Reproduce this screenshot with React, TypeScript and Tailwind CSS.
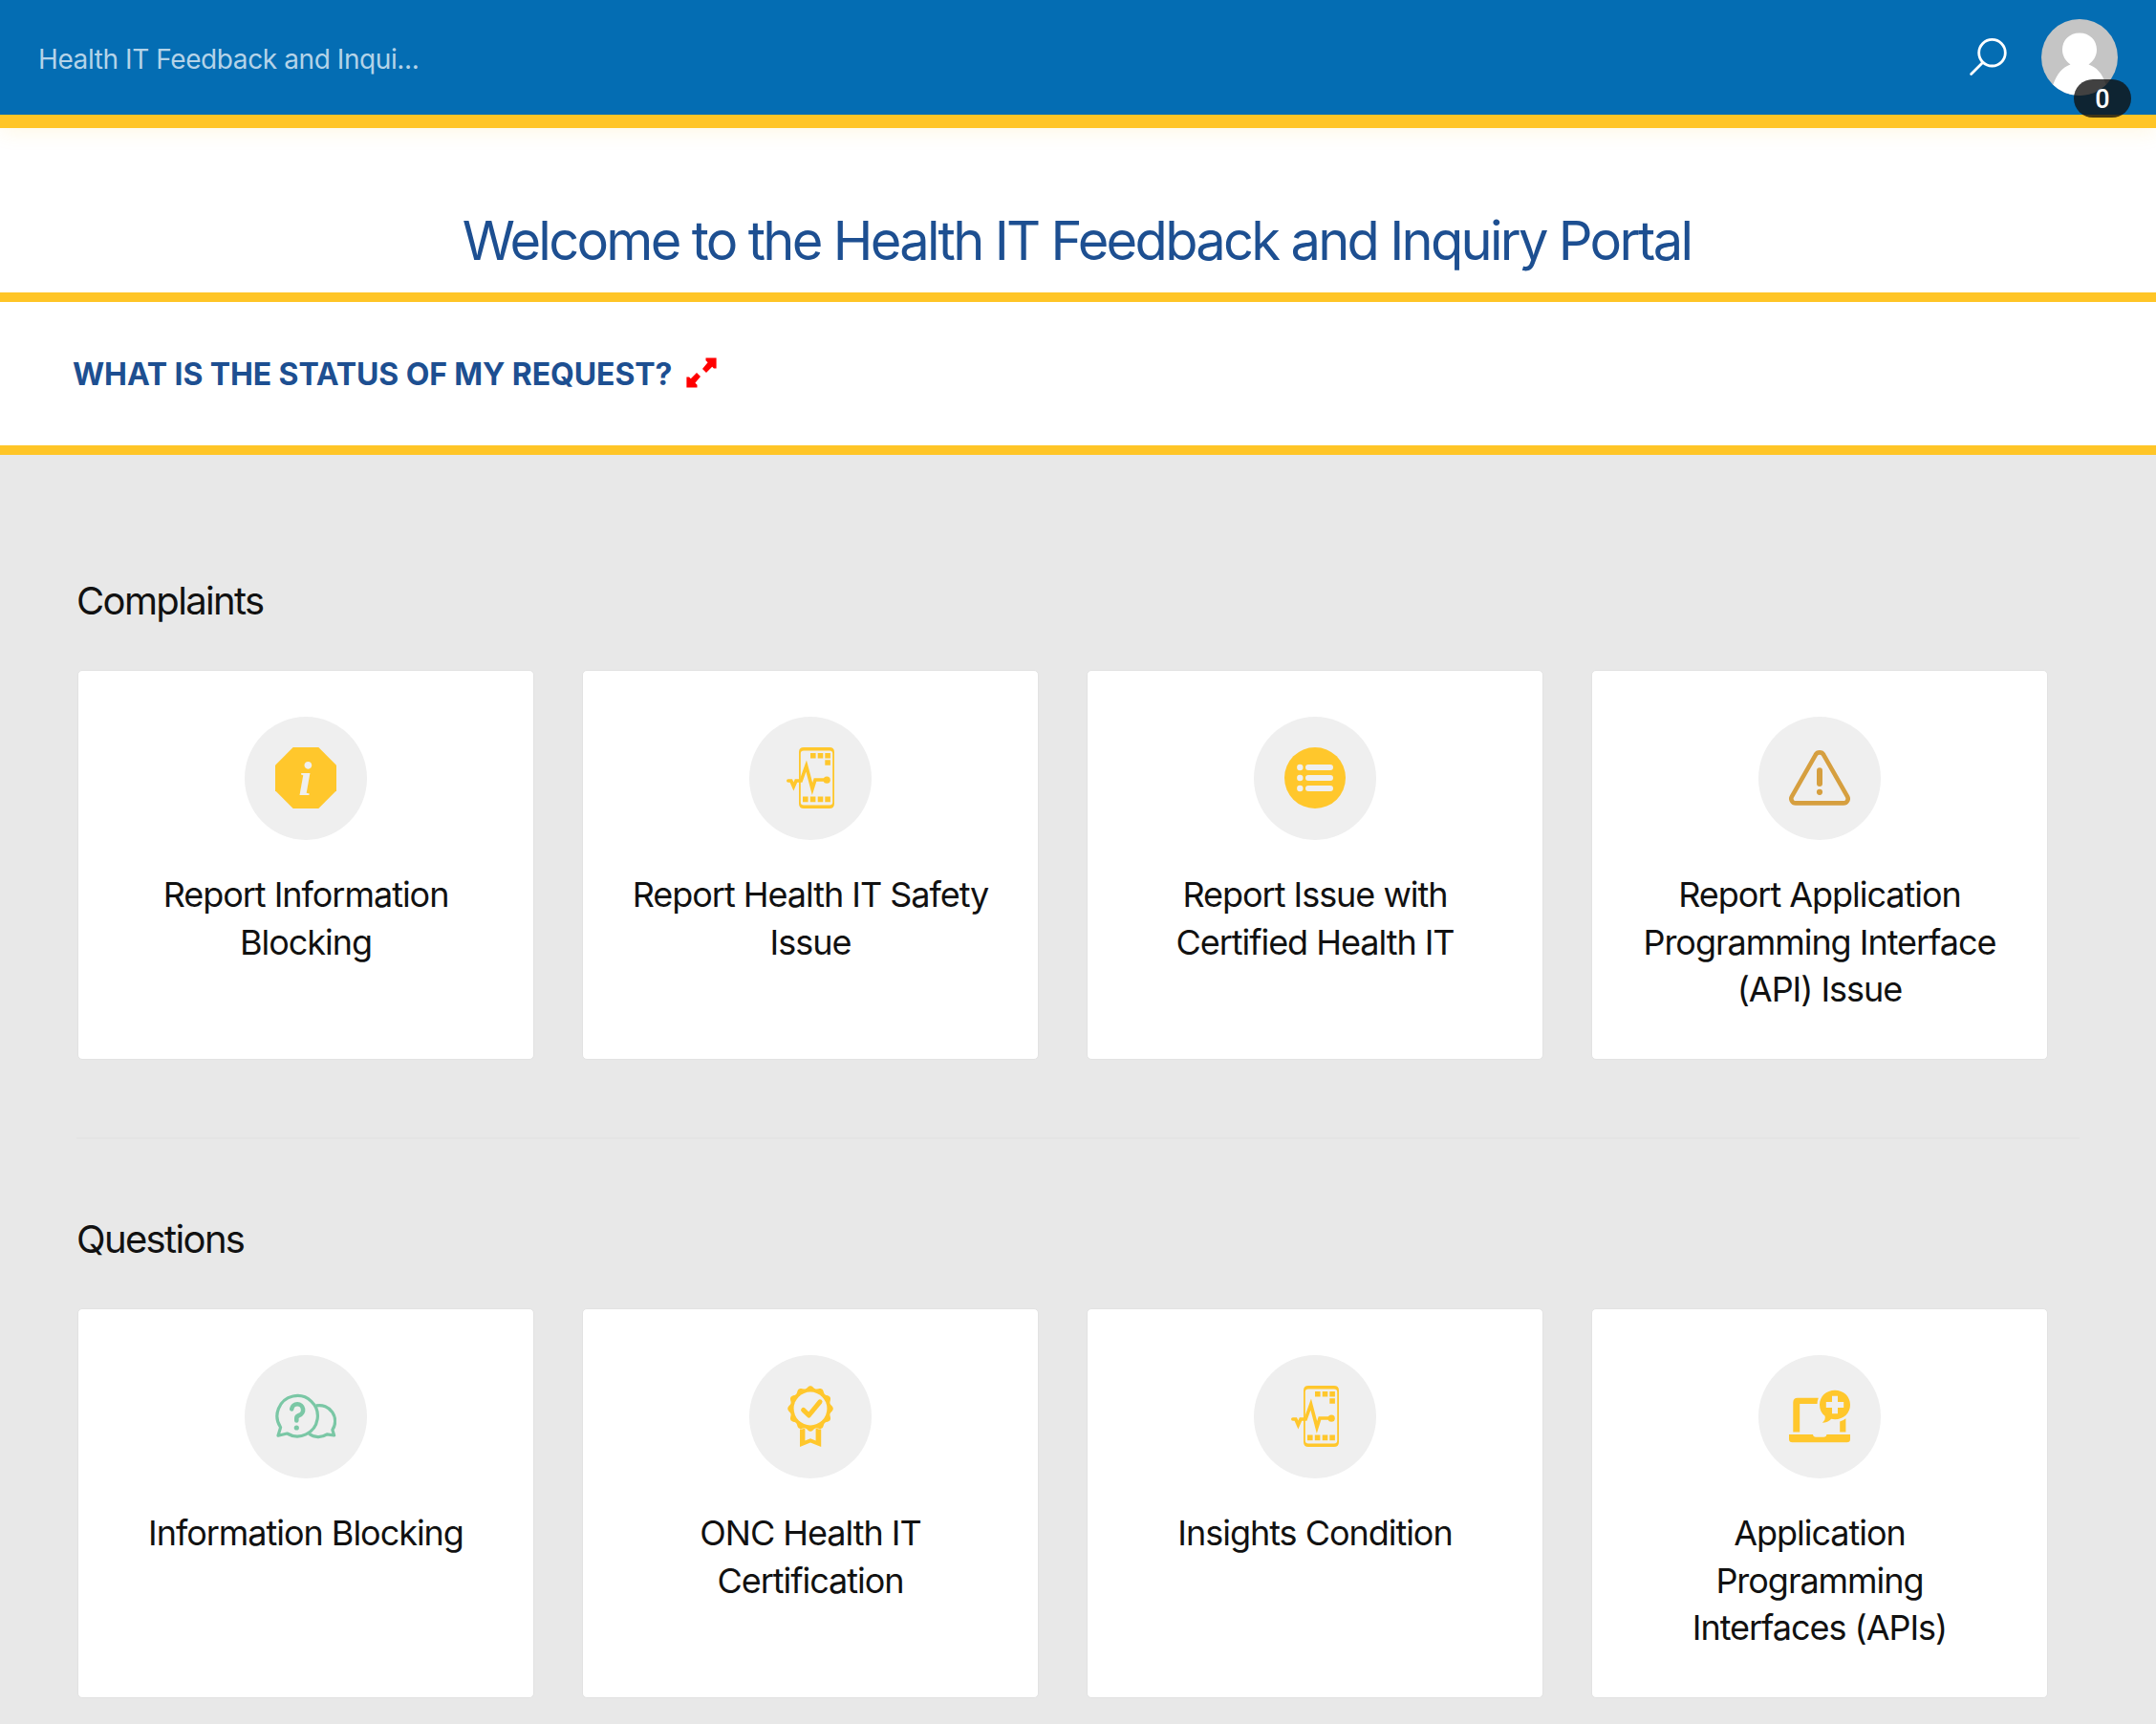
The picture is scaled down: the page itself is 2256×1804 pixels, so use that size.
import type { ReactNode } from "react";

const YELLOW = "#ffc72c";
const DISC = "#efefef";

function IconBox({ children }: { children: ReactNode }) {
  return (
    <svg viewBox="0 0 64 64" className="size-16" fill="none">
      {children}
    </svg>
  );
}

function InfoIcon() {
  return (
    <IconBox>
      <path d="M18.7 0H45.3L64 18.7V45.3L45.3 64H18.7L0 45.3V18.7Z" fill={YELLOW} />
      <text
        x="31.3"
        y="50.4"
        textAnchor="middle"
        fill={DISC}
        fontSize="51"
        fontWeight="700"
        fontStyle="italic"
        fontFamily="'Liberation Serif', serif"
      >
        i
      </text>
    </IconBox>
  );
}

function PhonePulseIcon() {
  return (
    <IconBox>
      <path
        fillRule="evenodd"
        fill={YELLOW}
        d="M25 0H52Q57 0 57 5V59Q57 64 52 64H25Q20 64 20 59V5Q20 0 25 0ZM25 3.6Q21.8 3.6 21.8 6.5V57.5Q21.8 60.4 25 60.4H52Q55.2 60.4 55.2 57.5V6.5Q55.2 3.6 52 3.6Z"
      />
      <path
        fill={YELLOW}
        d="M32 6h5.6v5.6H32zM39.7 6h5.6v5.6h-5.6zM47.3 6h5.6v5.6h-5.6zM47.3 13.3h5.6v5.4h-5.6zM24 51.6h5.6v5.6H24zM31.8 51.6h5.6v5.6h-5.6zM39.7 51.6h5.6v5.6h-5.6zM47.3 51.6h5.6v5.6h-5.6z"
      />
      <path
        d="M8.8 35H11.8L14.4 41L17 35H22.2L27.7 19.5L34 43.5L37 34H48"
        stroke={YELLOW}
        strokeWidth="3.6"
        strokeLinecap="round"
      />
      <circle cx="49.2" cy="34.2" r="3.6" fill={YELLOW} />
    </IconBox>
  );
}

function ListIcon() {
  return (
    <IconBox>
      <circle cx="32" cy="32" r="32" fill={YELLOW} />
      {[21, 32, 43].map((y) => (
        <g key={y} fill={DISC}>
          <circle cx="16.3" cy={y} r="3.2" />
          <rect x="22" y={y - 3} width="29" height="6" rx="3" />
        </g>
      ))}
    </IconBox>
  );
}

function WarningIcon() {
  return (
    <IconBox>
      <path
        d="M27.8 7.8a4.9 4.9 0 0 1 8.4 0L61 51.3a4.7 4.7 0 0 1-4.1 7.1H7.1a4.7 4.7 0 0 1-4.1-7.1Z"
        stroke="#d69f3f"
        strokeWidth="4.6"
      />
      <rect x="29" y="21.3" width="6" height="19.6" rx="3" fill="#d69f3f" />
      <circle cx="32" cy="46.8" r="3.1" fill="#d69f3f" />
    </IconBox>
  );
}

function ChatIcon() {
  return (
    <IconBox>
      <g stroke="#7ac7a5" strokeWidth="3.2" strokeLinejoin="round">
        <path d="M5.6 43.6A21.2 21.2 0 1 1 12.4 50L3 52.2Z" />
        <path d="M42.8 20.9A16.5 16.5 0 0 1 59.9 46.2L61.6 52L54.2 50.9A16.5 16.5 0 0 1 35.3 50.2" />
      </g>
      <path
        d="M17.2 24.4A6 6 0 1 1 25 31Q22.3 32 22.3 34V36.4"
        stroke="#7ac7a5"
        strokeWidth="4.6"
        strokeLinecap="round"
      />
      <circle cx="22.3" cy="44" r="2.6" fill="#7ac7a5" />
    </IconBox>
  );
}

function scallop(cx: number, cy: number, lobes: number) {
  const points: string[] = [];
  for (let i = 0; i < 240; i++) {
    const a = (i / 240) * Math.PI * 2;
    const r = 22.5 + 1.3 * Math.cos(a * lobes);
    points.push(`${(cx + r * Math.sin(a)).toFixed(2)},${(cy - r * Math.cos(a)).toFixed(2)}`);
  }
  return points.join(" ");
}

function RibbonIcon() {
  return (
    <IconBox>
      <path d="M21 45H26.4V57.6L32 55.2L37.6 57.6V45H43.2V64L32 59.4L21 64Z" fill={YELLOW} />
      <polygon points={scallop(32, 24, 12)} fill={YELLOW} stroke={DISC} strokeWidth="1.2" paintOrder="stroke" />
      <circle cx="32" cy="24" r="17.4" fill={DISC} />
      <path
        d="M24.6 25.4L30.4 31L42 16.8"
        stroke={YELLOW}
        strokeWidth="5"
        strokeLinecap="round"
        strokeLinejoin="round"
      />
    </IconBox>
  );
}

function LaptopIcon() {
  return (
    <IconBox>
      <g fill={YELLOW}>
        <path d="M0 51H25Q25.4 53.7 28 53.7H36.4Q39 53.7 39.4 51H64V56Q64 59.3 60.5 59.3H3.5Q0 59.3 0 56Z" />
        <path d="M4.3 48.4V17.5Q4.3 12.7 9 12.7H30.8Q29.6 15.6 29.5 19H11.2V48.4Z" />
        <path d="M53.2 48.4V37.6Q56.6 36.6 59.4 34.2V48.4Z" />
        <path d="M48 4.7C57 4.7 64 11.2 64 20S57 35.2 48 35.2Q46 35.2 44.2 34.8Q40.6 38.6 34.8 38.8Q38.6 35.6 37.6 31.8C34 29 32 25 32 20C32 11.2 39 4.7 48 4.7Z" />
      </g>
      <path d="M45 10.8H51V17H57.2V23H51V29.2H45V23H38.8V17H45Z" fill={DISC} />
    </IconBox>
  );
}

type Item = { icon: ReactNode; lines: string[] };

const COMPLAINTS: Item[] = [
  { icon: <InfoIcon />, lines: ["Report Information", "Blocking"] },
  { icon: <PhonePulseIcon />, lines: ["Report Health IT Safety", "Issue"] },
  { icon: <ListIcon />, lines: ["Report Issue with", "Certified Health IT"] },
  { icon: <WarningIcon />, lines: ["Report Application", "Programming Interface", "(API) Issue"] },
];

const QUESTIONS: Item[] = [
  { icon: <ChatIcon />, lines: ["Information Blocking"] },
  { icon: <RibbonIcon />, lines: ["ONC Health IT", "Certification"] },
  { icon: <PhonePulseIcon />, lines: ["Insights Condition"] },
  { icon: <LaptopIcon />, lines: ["Application", "Programming", "Interfaces (APIs)"] },
];

function Card({ icon, lines }: Item) {
  return (
    <a className="flex h-[408px] w-[478px] flex-col items-center rounded-[5px] border border-[#e2e2e2] bg-white pt-12">
      <div className="flex h-[129px] w-32 items-start justify-center rounded-[50%] bg-[#efefef] pt-8">{icon}</div>
      <div className="mt-[33px] text-center text-[36px] leading-[49.5px] tracking-[-1.03px] text-[#111]">
        {lines.map((line) => (
          <div key={line} className="whitespace-nowrap">
            {line}
          </div>
        ))}
      </div>
    </a>
  );
}

function Section({ title, items }: { title: string; items: Item[] }) {
  return (
    <section>
      <h2 className="text-[40px] leading-[48px] tracking-[-1.65px] text-[#111]">{title}</h2>
      <div className="mt-12 ml-px flex gap-[50px]">
        {items.map((item) => (
          <Card key={item.lines.join(" ")} {...item} />
        ))}
      </div>
    </section>
  );
}

export default function App() {
  return (
    <div className="h-[1804px] w-[2256px] overflow-hidden bg-[#e8e8e8] font-['Inter',sans-serif]">
      <header className="relative flex h-[134px] items-center justify-between border-b-[14px] border-[#ffc527] bg-[#046db3] px-10 shadow-[0_4px_20px_rgba(255,197,39,0.12)]">
        <div className="mt-[3px] text-[28px] leading-9 tracking-[-0.41px] text-[#b4d3e8]">
          Health IT Feedback and Inqui...
        </div>
        <div className="flex items-center gap-9">
          <svg viewBox="0 0 40 40" className="size-10" fill="none" stroke="#fff" strokeWidth="2.8" strokeLinecap="round">
            <circle cx="24.5" cy="15.2" r="13.8" />
            <path d="M14.6 25.4L2.6 37.4" />
          </svg>
          <div className="relative size-20">
            <svg viewBox="0 0 80 80" className="size-20">
              <clipPath id="avatar">
                <circle cx="40" cy="40" r="40" />
              </clipPath>
              <g clipPath="url(#avatar)">
                <rect width="80" height="80" fill="#c5c5c5" />
                <path
                  d="M40 14.5c10.5 0 18 7.500 18 17.500c0 6.500-3.500 12-8.500 15.500c8 2.500 14 9 18 20.500v14h-55v-14c4-11 10-18 18-20.500c-5-3.500-8.500-9-8.500-15.500c0-10 7.500-17.500 18-17.500z"
                  fill="#fff"
                />
              </g>
            </svg>
            <span className="absolute top-[63px] left-[34px] flex h-10 w-[60px] items-center justify-center rounded-full bg-[#111]/80 pt-[3px] font-['Roboto',sans-serif] text-[27px] font-medium text-white">
              0
            </span>
          </div>
        </div>
      </header>

      <div className="h-[182px] border-b-[10px] border-[#ffc527] bg-white pt-[86px]">
        <h1 className="pr-[3px] text-center text-[56px] leading-[64px] tracking-[-2.7px] whitespace-nowrap text-[#1d4f91]">
          Welcome to the Health IT Feedback and Inquiry Portal
        </h1>
      </div>

      <div className="flex h-[160px] items-start gap-[15px] border-b-[10px] border-[#ffc527] bg-white pt-[55px] pl-[76px]">
        <div className="mt-px text-[32px] leading-10 font-bold tracking-[-0.11px] whitespace-nowrap text-[#1d4f91]">
          WHAT IS THE STATUS OF MY REQUEST?
        </div>
        <svg viewBox="0 0 32 32" className="mt-[3px] size-8" fill="#f00">
          <path d="M20.500 .4H31.600V11.500H28.900L27.200 9.800L21 16L17 12L22.600 5.200L20.500 3.200Z" />
          <path d="M11.500 31.600H.4V20.500H3.100L4.800 22.200L11 16L15 20L9.400 26.800L11.500 28.800Z" />
        </svg>
      </div>

      <main className="px-20 pt-[129px]">
        <Section title="Complaints" items={COMPLAINTS} />
        <hr className="mt-[81px] mb-[81px] h-0.5 border-0 bg-[#e4e4e4]" />
        <Section title="Questions" items={QUESTIONS} />
      </main>
    </div>
  );
}
